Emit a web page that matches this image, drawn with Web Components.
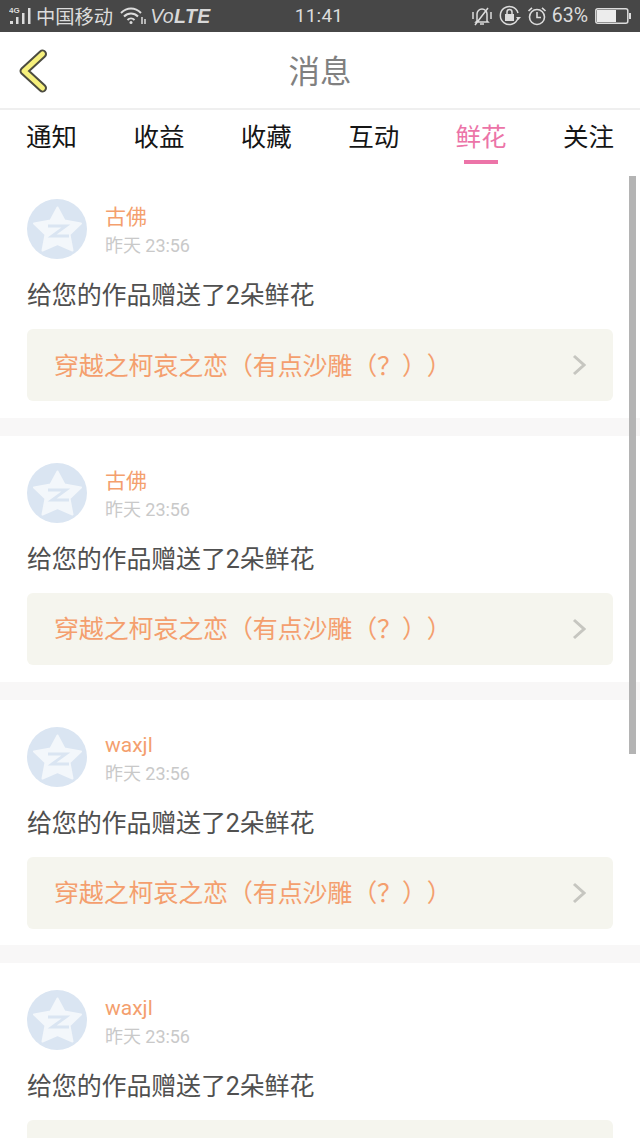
<!DOCTYPE html>
<html lang="zh"><head><meta charset="utf-8"><title>消息</title>
<style>
html,body{margin:0;padding:0;background:#fff}
body{width:640px;height:1138px;overflow:hidden;font-family:"Roboto","Noto Sans CJK SC",sans-serif}
</style></head><body>
<msg-app></msg-app>
<script>
const FONT='"Roboto","Noto Sans CJK SC",sans-serif';
class StatusBar extends HTMLElement{constructor(){super();this.attachShadow({mode:'open'}).innerHTML=`
<style>
:host{display:flex;height:32px;background:#474747;color:#dcdcdc;font:18px ${FONT};align-items:center;position:relative;box-sizing:border-box;padding:0 9px 0 9px}
.l{display:flex;align-items:center;flex:1}
.carrier{font-size:19.300px;margin-left:1px;margin-top:-1px}
.volte{font:italic 700 19.500px "Liberation Sans",sans-serif;margin-left:3px;color:#d8d8d8;letter-spacing:.4px}
.volte i{font-weight:400}
.time{flex:none;width:100px;text-align:center;font-size:19px;letter-spacing:.2px;margin-left:-2px;margin-top:-1px}
.r{display:flex;align-items:center;flex:1;justify-content:flex-end;gap:5px}
.pct{font-size:19.500px;margin-top:-1px}
.bat{margin-left:2px}
svg{display:block;flex:none}
</style>
<div class="l">
<svg width="26" height="24" viewBox="0 0 26 24" fill="#dcdcdc"><text x="0" y="9" font-size="8" font-family="Liberation Sans" font-weight="700">4G</text><rect x="1" y="17" width="3" height="3"/><rect x="7" y="13" width="2.5" height="7"/><rect x="13" y="9" width="2.5" height="11"/><rect x="19" y="4" width="2.5" height="16"/></svg>
<span class="carrier">中国移动</span>
<svg style="margin-left:7px" width="27" height="20" viewBox="0 0 27 20" fill="none" stroke="#dcdcdc" stroke-width="2"><path d="M1 7C7 1 15 1 21 7M4 10.500C8 6.500 14 6.500 18 10.500M7.500 14C9.500 12 12.500 12 14.500 14"/><circle cx="11" cy="16.500" r="1.500" fill="#dcdcdc" stroke="none"/><path d="M22 11v7M25 13v5" stroke-width="1.500"/></svg>
<span class="volte"><i>Vo</i>LTE</span>
</div>
<span class="time">11:41</span>
<div class="r">
<svg width="22" height="22" viewBox="0 0 22 22" fill="none" stroke="#dcdcdc" stroke-width="1.500"><path d="M6 16V9a5 5 0 0 1 10 0v7l1 1H5zM9 19h4M4 20L17 3"/><path d="M2 7v7M20 7v7"/></svg>
<svg width="24" height="24" viewBox="0 0 24 24" fill="none" stroke="#dcdcdc" stroke-width="1.500"><path d="M20 14A9 9 0 1 1 20 9"/><path d="M18 13h5l-2.500 3z" fill="#dcdcdc" stroke="none"/><rect x="7" y="10" width="9" height="7" fill="#dcdcdc" stroke="none"/><path d="M9 10V8a2.500 2.500 0 0 1 5 0v2"/></svg>
<svg width="20" height="20" viewBox="0 0 20 20" fill="none" stroke="#dcdcdc" stroke-width="1.600"><circle cx="10" cy="11" r="7.500"/><path d="M10 6v5.500h4M1.500 5L5 1.800M18.500 5L15 1.800"/></svg>
<span class="pct">63%</span>
<svg class="bat" width="36" height="18" viewBox="0 0 36 18"><rect x=".8" y="1.800" width="32" height="14.400" rx="2" fill="none" stroke="#dcdcdc" stroke-width="1.500"/><rect x="2" y="3" width="19" height="12" fill="#ececec"/><rect x="34" y="6" width="2" height="6" fill="#dcdcdc"/></svg>
</div>`}}
class TopBar extends HTMLElement{constructor(){super();this.attachShadow({mode:'open'}).innerHTML=`
<style>
:host{display:flex;height:76px;align-items:center;justify-content:center;position:relative;border-bottom:2px solid #efefef;background:#fff}
.t{font:31.500px ${FONT};color:#808080;margin-top:-3px}
svg{position:absolute;left:18px;top:17px}
</style>
<svg width="30" height="44" viewBox="0 0 30 44"><path d="M24.500 5L6 22L24.500 39" fill="none" stroke="#4c4c40" stroke-width="9" stroke-linecap="round" stroke-linejoin="round"/><path d="M24.500 5L6 22L24.500 39" fill="none" stroke="#f6f07c" stroke-width="5" stroke-linecap="round" stroke-linejoin="round"/></svg>
<span class="t"><slot></slot></span>`}}
class TabBar extends HTMLElement{constructor(){super();this.attachShadow({mode:'open'}).innerHTML=`
<style>:host{display:flex;height:62px;justify-content:space-between;padding:0 26px;background:#fff;box-sizing:border-box}</style><slot></slot>`}}
class TabItem extends HTMLElement{constructor(){super();const a=this.hasAttribute('active');this.attachShadow({mode:'open'}).innerHTML=`
<style>
:host{display:flex;flex-direction:column;align-items:center;font:25.500px ${FONT};color:${a?'#ec74a8':'#151515'};width:51px;padding-top:10px;box-sizing:border-box}
span{line-height:34px;white-space:nowrap}
i{display:${a?'block':'none'};width:34px;height:4px;background:#ec74a8;margin-top:6px}
</style><span><slot></slot></span><i></i>`}}
class MsgCard extends HTMLElement{constructor(){super();const w=this.getAttribute('work')||'';this.attachShadow({mode:'open'}).innerHTML=`
<style>
:host{display:block;height:245.750px;box-sizing:border-box;padding:27px 27px 0;background:#fff;font-family:${FONT}}
.head{display:flex;align-items:flex-start;height:60px}
.info{margin-left:18px;display:flex;flex-direction:column}
.name{font-size:21px;line-height:26px;color:#f49f6e;margin-top:5px}
.date{font-size:18px;line-height:22px;color:#c9c9c9;margin-top:5px;letter-spacing:-.05px}
.msg{font-size:25px;line-height:34px;color:#505050;margin-top:20px;white-space:nowrap;letter-spacing:-.15px}
.box{display:flex;align-items:center;justify-content:space-between;height:72px;margin-top:16px;background:#f5f5ee;border-radius:6px;padding:0 27px;color:#f49f6e;font-size:25px;white-space:nowrap}
.box span{margin-top:-3px;text-spacing-trim:space-all;letter-spacing:-.15px}
svg{display:block;flex:none}
</style>
<div class="head">
<svg width="60" height="60" viewBox="0 0 60 60"><circle cx="30" cy="30" r="30" fill="#dae5f2"/><path d="M30.500 8.500l7 13 16.500 3-11.500 11 3 16-15-6.500-15 6.500 3-16L7 24.500l16.500-3z" fill="#f3f7fb" stroke="#f3f7fb" stroke-width="2" stroke-linejoin="round"/><path d="M21 27h18l-14 10h17" fill="none" stroke="#dae5f2" stroke-width="2.800"/></svg>
<div class="info"><span class="name">${this.getAttribute('name')}</span><span class="date">昨天 23:56</span></div>
</div>
<div class="msg">给您的作品赠送了2朵鲜花</div>
<div class="box"><span>${w}</span>
<svg width="14" height="22" viewBox="0 0 14 22"><path d="M2 2L12 11L2 20" fill="none" stroke="#c6c6c0" stroke-width="3"/></svg></div>`}}
class MsgApp extends HTMLElement{constructor(){super();const W='穿越之柯哀之恋（有点沙雕（？））';this.attachShadow({mode:'open'}).innerHTML=`
<style>
:host{display:block;width:640px;height:1138px;overflow:hidden;position:relative;background:#fff}
.list{display:flex;flex-direction:column;gap:18px;background:#f8f7f7}
.bar{position:absolute;left:629px;top:176px;width:7px;height:578px;background:#b4b4b4}
</style>
<status-bar></status-bar>
<top-bar>消息</top-bar>
<tab-bar><tab-item>通知</tab-item><tab-item>收益</tab-item><tab-item>收藏</tab-item><tab-item>互动</tab-item><tab-item active>鲜花</tab-item><tab-item>关注</tab-item></tab-bar>
<div class="list"><msg-card name="古佛" work="${W}"></msg-card><msg-card name="古佛" work="${W}"></msg-card><msg-card name="waxjl" work="${W}"></msg-card><msg-card name="waxjl"></msg-card></div>
<div class="bar"></div>`}}
customElements.define('status-bar',StatusBar);
customElements.define('top-bar',TopBar);
customElements.define('tab-bar',TabBar);
customElements.define('tab-item',TabItem);
customElements.define('msg-card',MsgCard);
customElements.define('msg-app',MsgApp);
</script>
</body></html>
